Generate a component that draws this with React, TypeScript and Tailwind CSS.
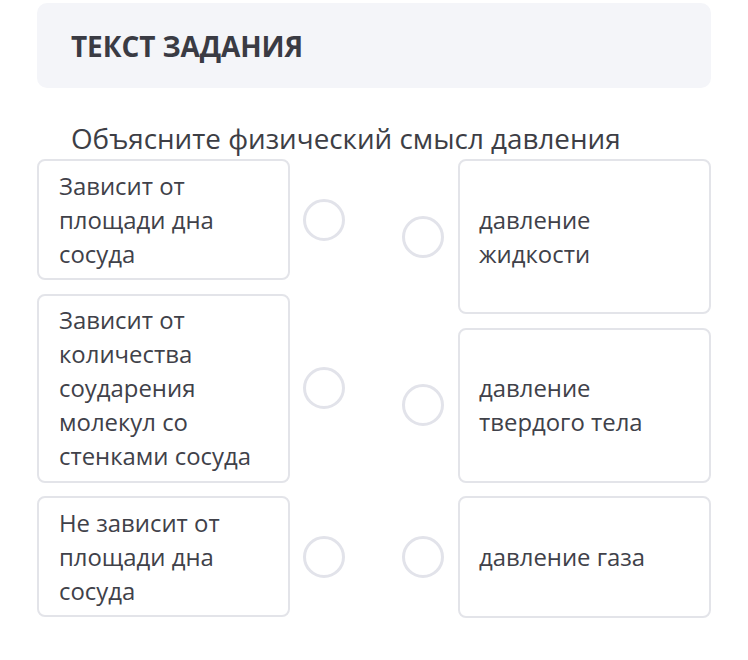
import React from "react";

const font = { fontFamily: '"Open Sans", "Noto Sans", sans-serif' };

function Circle() {
  return <div className="w-[42px] h-[42px] shrink-0 rounded-full border-[3px] border-[#e2e3ea] bg-white" />;
}

function LeftItem({ text }: { text: React.ReactNode }) {
  return (
    <div className="flex items-center gap-[13px]">
      <div className="w-[253px] rounded-[8px] border-2 border-[#e3e4e9] px-[20px] py-[7.5px] text-[23.9px] leading-[34px] text-[#404149]">
        {text}
      </div>
      <Circle />
    </div>
  );
}

function RightItem({ text, h }: { text: React.ReactNode; h: string }) {
  return (
    <div className="flex items-center gap-[14px]">
      <Circle />
      <div className={`w-[253px] ${h} flex items-center rounded-[8px] border-2 border-[#e3e4e9] px-[19px] text-[23.9px] leading-[34px] text-[#404149]`}>
        <div>{text}</div>
      </div>
    </div>
  );
}

export default function App() {
  return (
    <div className="w-[748px] h-[660px] bg-white px-[37px] pt-[3px]" style={font}>
      <div className="h-[85px] rounded-[10px] bg-[#f4f5f9] flex items-center pl-[34px]">
        <span className="text-[28px] font-bold text-[#3a3b44] tracking-[-0.1px]">ТЕКСТ ЗАДАНИЯ</span>
      </div>
      <div className="mt-[32px] pl-[34px] text-[27.8px] leading-[36px] text-[#3d3e45]">
        Объясните физический смысл давления
      </div>
      <div className="mt-[3px] flex justify-between">
        <div className="flex flex-col gap-[13.5px]">
          <LeftItem text={<>Зависит от<br />площади дна<br />сосуда</>} />
          <LeftItem text={<>Зависит от<br />количества<br />соударения<br />молекул со<br />стенками сосуда</>} />
          <LeftItem text={<>Не зависит от<br />площади дна<br />сосуда</>} />
        </div>
        <div className="flex flex-col gap-[13.5px]">
          <RightItem h="h-[155px]" text={<>давление<br />жидкости</>} />
          <RightItem h="h-[155px]" text={<>давление<br />твердого тела</>} />
          <RightItem h="h-[122px]" text={<>давление газа</>} />
        </div>
      </div>
    </div>
  );
}
